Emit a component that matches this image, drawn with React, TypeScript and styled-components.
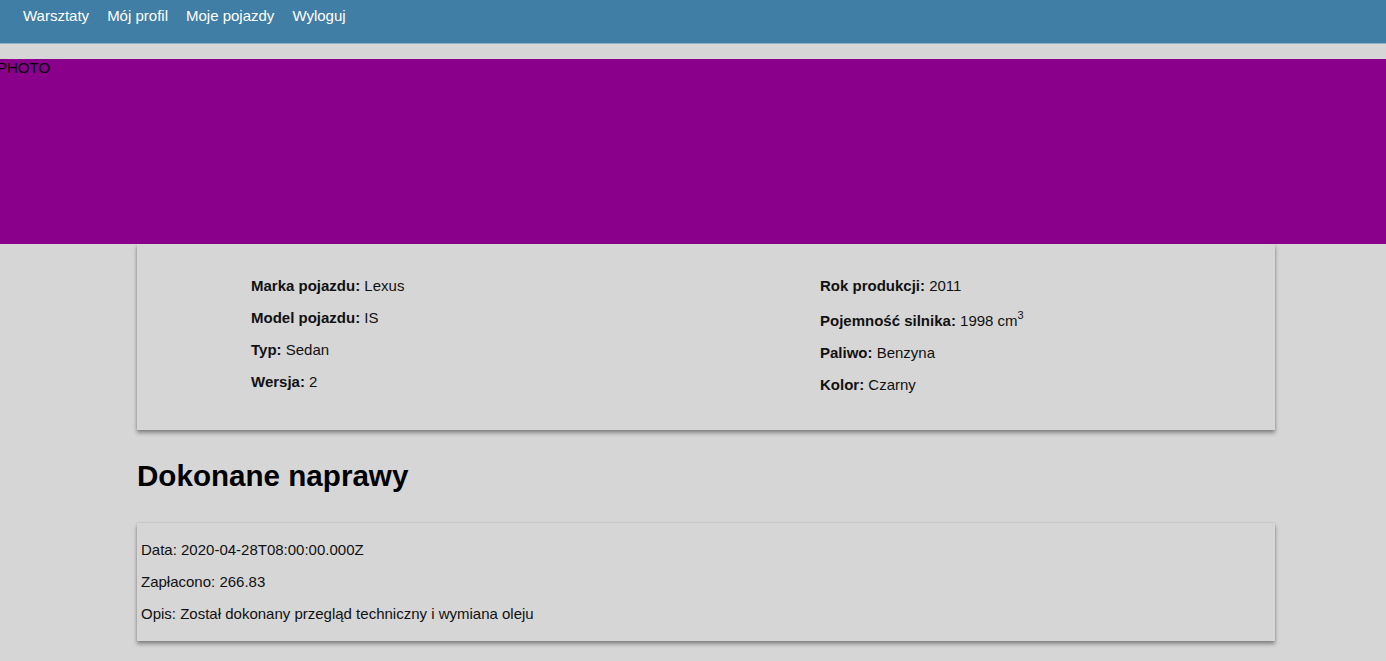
import React from "react";
import styled, { createGlobalStyle } from "styled-components";

const Global = createGlobalStyle`
  html, body { margin: 0; padding: 0; }
  body {
    background: #d6d6d6;
    font-family: "Liberation Sans", Arial, sans-serif;
    font-size: 15px;
    color: #111;
  }
`;

const Nav = styled.nav`
  height: 44px;
  background: #407ea5;
  border-bottom: 1px solid #8fb3cb;
  display: flex;
  align-items: flex-start;
  gap: 18px;
  padding: 7px 0 0 23px;
  box-sizing: border-box;
`;

const NavLink = styled.a`
  color: #fff;
  font-size: 15px;
  line-height: 17px;
  text-decoration: none;
  cursor: pointer;
`;

const Photo = styled.div`
  margin-top: 15px;
  height: 185px;
  background: #8b008b;
  color: #000;
  font-size: 15px;
  line-height: 17px;
  text-indent: -3px;
  padding-top: 0;
  box-sizing: border-box;
  overflow: hidden;
`;

const Container = styled.main`
  width: 1138px;
  margin: 0 0 0 137px;
  padding-bottom: 20px;
`;

const Card = styled.section<{ $pad: string }>`
  background: #d6d6d6;
  box-shadow: 0 3px 4px rgba(0, 0, 0, 0.38), 0 0 2px rgba(0, 0, 0, 0.12);
  padding: ${(p) => p.$pad};
`;

const Columns = styled.div`
  display: grid;
  grid-template-columns: 1fr 1fr;
`;

const Column = styled.div`
  padding-left: 114px;
`;

const Row = styled.p`
  margin: 15px 0;
  line-height: 17px;
  font-size: 15px;
  sup { font-size: 11px; line-height: 12px; vertical-align: 7px; }
`;

const Label = styled.b`
  font-weight: 700;
`;

const Heading = styled.h1`
  font-size: 29.6px;
  line-height: 34px;
  font-weight: 700;
  margin: 29px 0 30px;
  color: #000;
`;

const left = [
  ["Marka pojazdu:", "Lexus"],
  ["Model pojazdu:", "IS"],
  ["Typ:", "Sedan"],
  ["Wersja:", "2"],
];

export default function App() {
  return (
    <>
      <Global />
      <Nav>
        <NavLink>Warsztaty</NavLink>
        <NavLink>Mój profil</NavLink>
        <NavLink>Moje pojazdy</NavLink>
        <NavLink>Wyloguj</NavLink>
      </Nav>
      <Photo>PHOTO</Photo>
      <Container>
        <Card $pad="18px 0 22px">
          <Columns>
            <Column>
              {left.map(([l, v]) => (
                <Row key={l}>
                  <Label>{l}</Label> {v}
                </Row>
              ))}
            </Column>
            <Column>
              <Row>
                <Label>Rok produkcji:</Label> 2011
              </Row>
              <Row>
                <Label>Pojemność silnika:</Label> 1998 cm<sup>3</sup>
              </Row>
              <Row>
                <Label>Paliwo:</Label> Benzyna
              </Row>
              <Row>
                <Label>Kolor:</Label> Czarny
              </Row>
            </Column>
          </Columns>
        </Card>
        <Heading>Dokonane naprawy</Heading>
        <Card $pad="3px 4px 4px">
          <Row>Data: 2020-04-28T08:00:00.000Z</Row>
          <Row>Zapłacono: 266.83</Row>
          <Row>Opis: Został dokonany przegląd techniczny i wymiana oleju</Row>
        </Card>
      </Container>
    </>
  );
}
